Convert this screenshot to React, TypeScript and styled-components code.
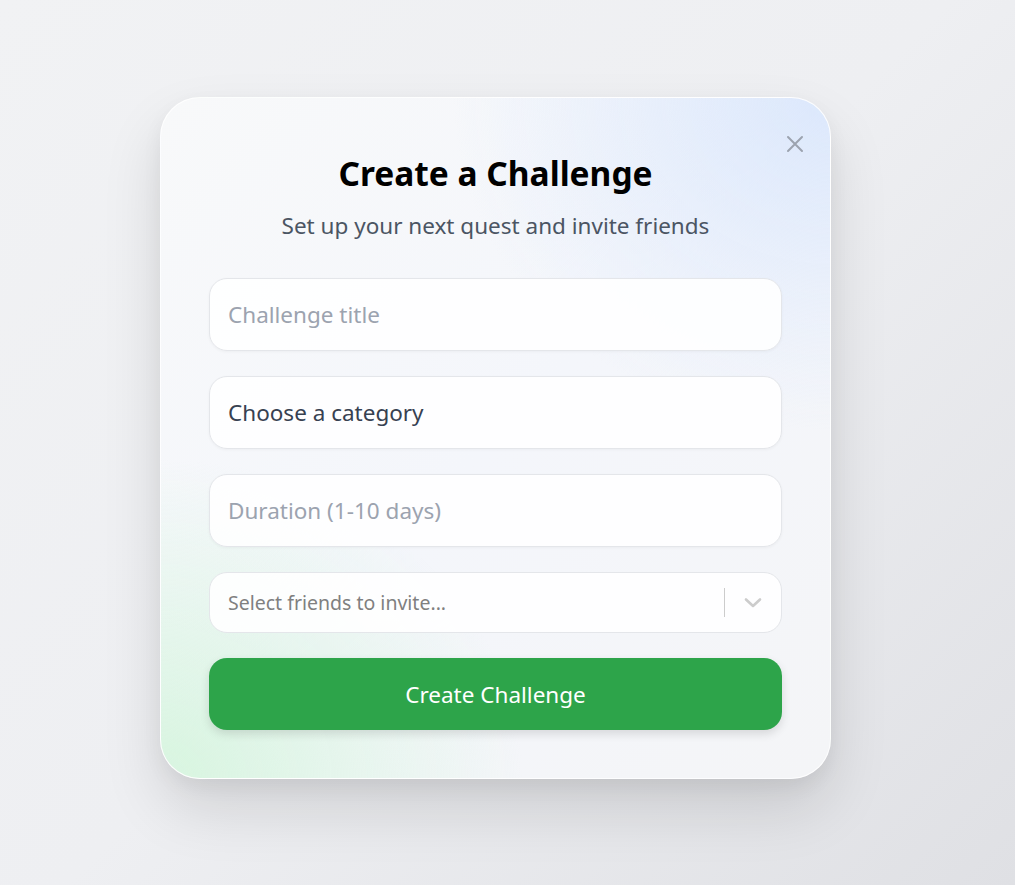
import React from "react";
import styled, { createGlobalStyle } from "styled-components";

const Global = createGlobalStyle`
  html, body { margin: 0; padding: 0; }
  body {
    font-family: "Noto Sans", "Open Sans", sans-serif;
    background: linear-gradient(135deg, #f1f2f4 0%, #eeeff2 50%, #dfe0e4 100%);
    min-height: 885px;
  }
`;

const Page = styled.div`
  min-height: 885px;
  display: flex;
  justify-content: center;
  align-items: flex-start;
  padding: 97px 24px 0 0;
  box-sizing: border-box;
`;

const Card = styled.div`
  position: relative;
  width: 671px;
  box-sizing: border-box;
  padding: 48px 48px 48px;
  border-radius: 40px;
  border: 1px solid rgba(255, 255, 255, 0.9);
  background:
    radial-gradient(ellipse 75% 65% at 0% 100%, rgba(214, 245, 222, 0.95) 0%, rgba(214, 245, 222, 0) 72%),
    radial-gradient(ellipse 75% 65% at 100% 0%, rgba(220, 232, 252, 1) 0%, rgba(220, 232, 252, 0) 75%),
    linear-gradient(135deg, #f8f9fa 0%, #f4f6fb 50%, #f4f5f7 100%);
  box-shadow: 0 30px 60px rgba(0, 0, 0, 0.12), 0 8px 20px rgba(0, 0, 0, 0.05);
`;

const CloseButton = styled.button`
  position: absolute;
  top: 34px;
  right: 23px;
  width: 24px;
  height: 24px;
  padding: 0;
  border: none;
  background: transparent;
  color: #9ca3af;
  display: flex;
  align-items: center;
  justify-content: center;
  cursor: pointer;
`;

const Title = styled.h1`
  margin: 0;
  text-align: center;
  font-size: 33.5px;
  font-weight: 700;
  line-height: 54px;
  color: #000;
`;

const Subtitle = styled.p`
  margin: 2px 0 28px;
  text-align: center;
  font-size: 22.5px;
  line-height: 48px;
  color: #4b5563;
`;

const Form = styled.div`
  display: flex;
  flex-direction: column;
  gap: 25px;
`;

const Field = styled.div<{ $muted?: boolean }>`
  height: 73px;
  box-sizing: border-box;
  border-radius: 18px;
  border: 1px solid #e4e6ea;
  background: rgba(255, 255, 255, 0.88);
  box-shadow: 0 1px 3px rgba(0, 0, 0, 0.04);
  display: flex;
  align-items: center;
  padding: 0 18px;
  font-size: 22.5px;
  color: ${(p) => (p.$muted ? "#9ca3af" : "#374151")};
`;

const SelectBox = styled.div`
  height: 61px;
  box-sizing: border-box;
  border-radius: 18px;
  border: 1px solid #e4e6ea;
  background: rgba(255, 255, 255, 0.9);
  display: flex;
  align-items: center;
  padding-left: 18px;
`;

const SelectPlaceholder = styled.span`
  flex: 1;
  font-size: 19.5px;
  color: #808080;
`;

const Indicators = styled.div`
  display: flex;
  align-items: center;
  align-self: stretch;
  padding: 15px 0;
  box-sizing: border-box;
`;

const Separator = styled.span`
  width: 1px;
  align-self: stretch;
  background: #cccccc;
`;

const Chevron = styled.span`
  width: 56px;
  display: flex;
  justify-content: center;
  color: #cccccc;
`;

const Submit = styled.button`
  height: 72px;
  border: none;
  border-radius: 18px;
  background: #2da44a;
  color: #fff;
  font-family: inherit;
  font-size: 22.5px;
  box-shadow: 0 4px 10px rgba(0, 0, 0, 0.12);
  cursor: pointer;
`;

export default function App() {
  return (
    <>
      <Global />
      <Page>
        <Card>
          <CloseButton aria-label="Close">
            <svg width="20" height="20" viewBox="0 0 20 20" fill="none" stroke="currentColor" strokeWidth="2" strokeLinecap="round">
              <path d="M3 3 L17 17 M17 3 L3 17" />
            </svg>
          </CloseButton>
          <Title>Create a Challenge</Title>
          <Subtitle>Set up your next quest and invite friends</Subtitle>
          <Form>
            <Field $muted>Challenge title</Field>
            <Field>Choose a category</Field>
            <Field $muted>Duration (1-10 days)</Field>
            <SelectBox>
              <SelectPlaceholder>Select friends to invite...</SelectPlaceholder>
              <Indicators>
                <Separator />
                <Chevron>
                  <svg width="20" height="12" viewBox="0 0 20 12" fill="none" stroke="currentColor" strokeWidth="2.6" strokeLinecap="round" strokeLinejoin="round">
                    <path d="M3 2.5 L10 9 L17 2.5" />
                  </svg>
                </Chevron>
              </Indicators>
            </SelectBox>
            <Submit>Create Challenge</Submit>
          </Form>
        </Card>
      </Page>
    </>
  );
}
